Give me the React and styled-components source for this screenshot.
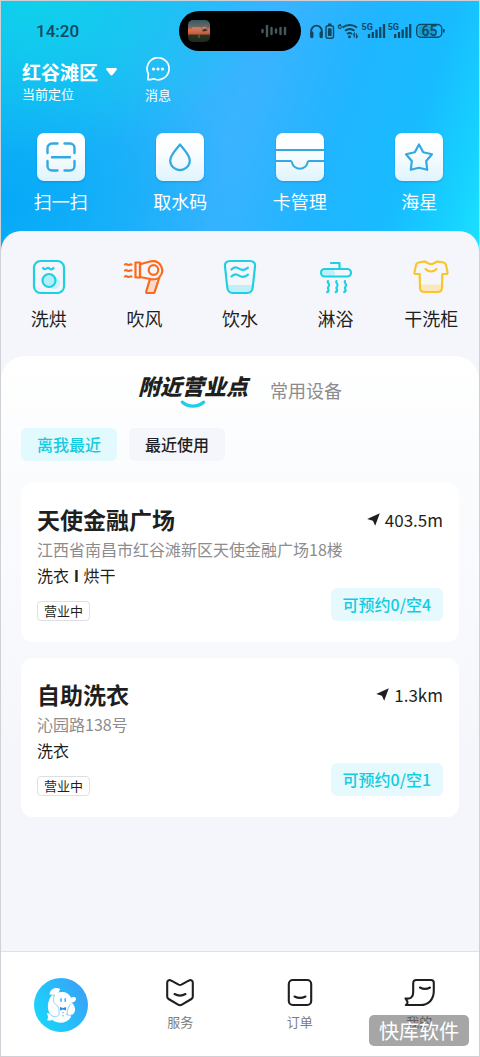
import React, { useState } from 'react'
import styled, { createGlobalStyle } from 'styled-components';

const GlobalStyle = createGlobalStyle`
    :root{
        --black: #1f1f21;
        --gray: #8c8c8e;
        --white: #fff;
        --cyan: #14cbe0;
        --cyanLight: #e2f9fd;
        --background: #f5f6fb;
    }
    *{
        box-sizing: border-box;
    }
    body{
        margin: 0;
        font-family: "Noto Sans CJK SC", "Noto Sans", sans-serif;
        color: var(--black);
    }
    button{
        font-family: inherit;
        color: inherit;
        border: 0;
        padding: 0;
        background: none;
        cursor: pointer;
    }
    a{
        text-decoration: none;
        color: inherit;
    }
    h2, p{
        margin: 0;
    }
    svg{
        display: block;
        flex: none;
    }
`

const PageStyled = styled.div`
    display: flex;
    flex-direction: column;
    min-height: 100vh;
    border: 1px solid #cfd1d6;
    background: var(--background);
`

const HeaderStyled = styled.header`
    padding: 10px 0 41px;
    color: var(--white);
    background:
        radial-gradient(ellipse 48% 60% at 8% 0%, rgba(14,210,234,0.9) 0%, rgba(16,208,232,0) 100%),
        radial-gradient(ellipse 50% 70% at 0% 80%, #06a9f8 0%, rgba(6,169,248,0) 100%),
        linear-gradient(108deg, #14bcf4 0%, #28b6fa 28%, #3ab3ff 50%, #20b5ff 68%, #18bcff 82%, #16d2ff 93%, #1ce2ff 100%);
`

const StatusBarStyled = styled.div`
    display: grid;
    grid-template-columns: 1fr 122px 1fr;
    align-items: center;
    height: 40px;
    color: #12485f;
    time{
        padding-left: 35px;
        font-family: Roboto, "Noto Sans", sans-serif;
        font-size: 17px;
        font-weight: 500;
    }
`

const IslandStyled = styled.div`
    display: flex;
    align-items: center;
    justify-content: space-between;
    height: 40px;
    padding: 0 14px 0 9px;
    border-radius: 20px;
    background: #000;
`

const SignalsStyled = styled.div`
    display: flex;
    align-items: center;
    padding-left: 8px;
`

const PlaceBarStyled = styled.div`
    display: flex;
    gap: 28px;
    padding: 6px 21px 0;
`

const PlaceStyled = styled.button`
    text-align: left;
    font-size: 13px;
    line-height: 18px;
    strong{
        display: flex;
        align-items: center;
        gap: 8px;
        font-size: 19px;
        line-height: 26px;
        font-weight: 700;
    }
`

const MessageStyled = styled.button`
    display: flex;
    flex-direction: column;
    align-items: center;
    gap: 4px;
    font-size: 13px;
    line-height: 20px;
`

const QuickGridStyled = styled.nav`
    display: grid;
    grid-template-columns: repeat(4, 1fr);
    padding-top: 28px;
`

const QuickItemStyled = styled.a`
    display: flex;
    flex-direction: column;
    align-items: center;
    gap: 7px;
    font-size: 18px;
    line-height: 26px;
    svg{
        filter: drop-shadow(0 1px 1px rgba(0,90,170,0.3));
    }
`

const ServicesStyled = styled.nav`
    display: grid;
    grid-template-columns: repeat(5, 1fr);
    margin-top: -24px;
    padding: 28px 0 48px;
    border-radius: 20px 20px 0 0;
    background: var(--background);
`

const ServiceItemStyled = styled.a`
    display: flex;
    flex-direction: column;
    align-items: center;
    gap: 9px;
    font-size: 18px;
    line-height: 28px;
`

const NearbyStyled = styled.main`
    flex: 1;
    margin-top: -24px;
    padding: 14px 20px 24px;
    border-radius: 24px 24px 0 0;
    background: linear-gradient(180deg, #fff 0, #fbfcfe 110px, #f5f6fb 420px);
`

const TabsStyled = styled.div`
    display: flex;
    align-items: flex-start;
    justify-content: center;
    gap: 22px;
    height: 42px;
`

const TabStyled = styled.button`
    display: flex;
    flex-direction: column;
    align-items: center;
    font-size: ${({ $active }) => $active ? '22px' : '18px'};
    font-weight: ${({ $active }) => $active ? 900 : 400};
    font-style: ${({ $active }) => $active ? 'italic' : 'normal'};
    line-height: ${({ $active }) => $active ? '30px' : '40px'};
    color: ${({ $active }) => $active ? 'var(--black)' : 'var(--gray)'};
`

const FiltersStyled = styled.div`
    display: flex;
    gap: 12px;
    padding: 16px 0 22px;
`

const FilterStyled = styled.button`
    height: 33px;
    padding: 0 16px;
    border-radius: 6px;
    font-size: 16px;
    font-weight: 500;
    line-height: 33px;
    color: ${({ $active }) => $active ? 'var(--cyan)' : 'var(--black)'};
    background: ${({ $active }) => $active ? 'var(--cyanLight)' : 'var(--background)'};
`

const ListStyled = styled.div`
    display: grid;
    gap: 16px;
`

const CardStyled = styled.article`
    padding: 19px 16px 21px;
    border-radius: 12px;
    background: var(--white);
    h2{
        font-size: 23px;
        font-weight: 700;
        line-height: 34px;
    }
    p{
        font-size: 16px;
        line-height: 26px;
    }
    .address{
        color: var(--gray);
    }
    b{
        font-weight: 700;
        padding: 0 1px;
    }
`

const CardRowStyled = styled.div`
    display: flex;
    align-items: ${({ $align }) => $align};
    justify-content: space-between;
`

const DistanceStyled = styled.span`
    display: flex;
    align-items: center;
    gap: 5px;
    font-size: 17px;
`

const StatusStyled = styled.span`
    display: block;
    width: fit-content;
    margin-top: 13px;
    padding: 0 6px;
    border: 1px solid #dedfe2;
    border-radius: 4px;
    font-size: 13px;
    line-height: 18px;
`

const ReserveStyled = styled.button`
    height: 33px;
    padding: 0 12px;
    border-radius: 6px;
    font-size: 16px;
    font-weight: 500;
    line-height: 33px;
    color: var(--cyan);
    background: #e6fafe;
`

const TabBarStyled = styled.nav`
    position: relative;
    display: grid;
    grid-template-columns: repeat(4, 1fr);
    align-items: center;
    height: 105px;
    border-top: 1px solid #e0e1e5;
    background: var(--white);
`

const TabBarItemStyled = styled.a`
    display: flex;
    flex-direction: column;
    align-items: center;
    gap: 4px;
    padding-top: 2px;
    font-size: 13px;
    line-height: 20px;
    color: #7d7d80;
`

const WatermarkStyled = styled.div`
    position: absolute;
    right: 10px;
    bottom: 10px;
    padding: 0 10px;
    border-radius: 5px;
    font-size: 20px;
    line-height: 31px;
    color: var(--white);
    background: rgba(60,60,60,0.46);
`

const IslandArt = () => (
    <svg width="22" height="22" viewBox="0 0 22 22">
        <defs>
            <linearGradient id="sunset" x1="0" y1="0" x2="0" y2="1">
                <stop offset="0" stopColor="#355a63" />
                <stop offset=".3" stopColor="#6e6463" />
                <stop offset=".45" stopColor="#e0704a" />
                <stop offset=".62" stopColor="#c25c3e" />
                <stop offset=".7" stopColor="#2b3322" />
                <stop offset="1" stopColor="#1c2a1c" />
            </linearGradient>
        </defs>
        <rect width="22" height="22" rx="5" fill="url(#sunset)" />
        <path d="M4 8h9M14 8l4-1" stroke="#c9c2b8" strokeWidth="1" opacity=".6" />
        <path d="M14 10l3-1 3 1-2 1-3 .5z" fill="#3a2c2c" />
        <path d="M11 13v5" stroke="#8b6a50" strokeWidth="1" />
    </svg>
)

const IslandWave = () => (
    <svg width="26" height="14" viewBox="0 0 26 14" stroke="#46595c" strokeWidth="2.400" strokeLinecap="round">
        <path d="M1.500 6v2M6 2v10M10.500 4v6M15 5.500v3M19.500 4v6M24 4v6" />
    </svg>
)

const StatusIcons = () => (
    <svg width="136" height="20" viewBox="0 0 136 20" fill="none" stroke="#12485f">
        <path d="M2.200 13v-3a5.300 5.300 0 0 1 10.600 0v3" strokeWidth="1.800" />
        <path d="M2.800 12v3.500M12.200 12v3.500" strokeWidth="3.400" strokeLinecap="round" />
        <rect x="17" y="4.800" width="7.500" height="12.500" rx="2" strokeWidth="1.400" />
        <path d="M19 3.300h3.500" strokeWidth="1.600" />
        <path d="M18.900 7.300h3.700v7.700h-3.700z" fill="#12485f" stroke="none" />
        <path d="M33.500 6.500a12 12 0 0 1 14.500 0M36 9.800a7.800 7.800 0 0 1 9.500 0M38 13a4.200 4.200 0 0 1 5 0" strokeWidth="1.900" />
        <circle cx="40.500" cy="15.800" r="1.500" fill="#12485f" stroke="none" />
        <path d="M45.300 16.500v-4l-1.300 1.500M47.500 12.500v4l1.300-1.500" strokeWidth="1.200" />
        <path d="M60 17v-4M63.800 17v-6M67.500 17v-8.500M71.200 17v-11M75 17v-14" strokeWidth="2.300" />
        <path d="M86.200 17v-4M90 17v-6M93.700 17v-8.500M97.500 17v-11M101.200 17v-14" strokeWidth="2.300" />
        <rect x="107.700" y="3.500" width="25" height="12.800" rx="4" strokeWidth="1.400" />
        <rect x="109.500" y="5.300" width="16" height="9.200" rx="2" fill="#12485f" fillOpacity=".28" stroke="none" />
        <path d="M134.800 8v3.600" strokeWidth="1.600" />
        <g fill="#12485f" stroke="none" fontWeight="700" fontFamily="Roboto, sans-serif">
            <text x="28.500" y="8" fontSize="8">6</text>
            <text x="52.500" y="9" fontSize="9">5G</text>
            <text x="78.700" y="9" fontSize="9">5G</text>
            <text x="112.500" y="14.700" fontSize="14" fontWeight="500">65</text>
        </g>
    </svg>
)

const MessageIcon = () => (
    <svg width="26" height="24" viewBox="0 0 26 24" fill="none" stroke="#fff" strokeWidth="1.700" strokeLinejoin="round">
        <path d="M2.800 22.600l.6-5.600A11 11 0 1 1 8.600 21.800c-1.500.8-3.600 1-5.800.8z" />
        <g fill="#fff" stroke="none">
            <circle cx="8.500" cy="12" r="1.600" />
            <circle cx="13" cy="12" r="1.600" />
            <circle cx="17.500" cy="12" r="1.600" />
        </g>
    </svg>
)

const Tile = ({ children }) => (
    <svg width="48" height="48" viewBox="0 0 48 48" fill="none" stroke="#33a9e2" strokeWidth="2.200" strokeLinecap="round" strokeLinejoin="round">
        <defs>
            <linearGradient id="tile" x1="0" y1="0" x2="0" y2="1">
                <stop offset="0" stopColor="#fff" />
                <stop offset=".4" stopColor="#fafdff" />
                <stop offset="1" stopColor="#dff4fd" />
            </linearGradient>
        </defs>
        <rect width="48" height="48" rx="7" fill="url(#tile)" stroke="none" />
        {children}
    </svg>
)

const quickItems = [
    {
        label: '扫一扫',
        icon: <Tile>
            <path d="M20.500 10.500h-5.500a4.500 4.500 0 0 0-4.500 4.500v5M27.500 10.500h5.500a4.500 4.500 0 0 1 4.500 4.500v5M10.500 28v5a4.500 4.500 0 0 0 4.500 4.500h5.500M37.500 28v5a4.500 4.500 0 0 1-4.500 4.500h-5.500M15 24.200h18" strokeWidth="2.400" />
        </Tile>
    },
    {
        label: '取水码',
        icon: <Tile>
            <path d="M24 11.500c-4 5-9.800 10.500-9.800 16a9.800 9.600 0 0 0 19.600 0c0-5.500-5.800-11-9.800-16z" />
        </Tile>
    },
    {
        label: '卡管理',
        icon: <Tile>
            <path d="M0 17h48M0 28h14.500c.8 0 1.200.5 1.500 1.500a8 8 0 0 0 15.600 0c.3-1 .8-1.500 1.600-1.500H48" strokeLinecap="butt" strokeWidth="2" />
        </Tile>
    },
    {
        label: '海星',
        icon: <Tile>
            <path d="M24 11.500l4.200 7.800 8.800 2-5.800 6.700 1 8.800-8.200-2-8.200 2 1-8.800-5.800-6.700 8.800-2z" strokeWidth="2.200" />
        </Tile>
    },
]

const serviceItems = [
    {
        label: '洗烘',
        icon: <svg width="36" height="36" viewBox="0 0 36 36" fill="none" stroke="#1fd0e3" strokeWidth="2.200" strokeLinecap="round">
            <circle cx="23" cy="24" r="6" fill="#c9f3f8" stroke="none" />
            <rect x="3" y="2" width="30" height="32" rx="6.500" />
            <path d="M12 9c1.200 1.500 2.200 1.500 3.500.5s2.300-.8 3.200.2 2.500 1 3.800-.7" />
            <circle cx="18" cy="21.500" r="6.500" fill="#b3eff6" />
        </svg>
    },
    {
        label: '吹风',
        icon: <svg width="42" height="36" viewBox="0 0 42 36" fill="none" stroke="#fb6a1c" strokeWidth="2.200" strokeLinejoin="round" strokeLinecap="round">
            <path d="M25 22l9 0-2.500 11h-7z" fill="#fcd9c8" stroke="none" />
            <path d="M12.500 3.500h4.500v15h-4.500z" />
            <path d="M17 5.200L28 2.300a9.300 9.300 0 0 1 8.500 15.600l-4.800 15c-.2.800-.6 1.100-1.400 1.100h-6c-1 0-1.400-.6-1.100-1.500L27 20l-10-2z" />
            <path d="M27 20c2.500.8 5 .6 8-.5" />
            <circle cx="30.500" cy="11" r="4.800" />
            <path d="M2 5.500c1.500-1.300 2.500.8 4 .5s1.500-.8 2.500-.5M2 11.500c1.500-1.300 2.500.8 4 .5s1.500-.8 2.500-.5M2 17.500c1.500-1.300 2.500.8 4 .5s1.500-.8 2.500-.5" />
        </svg>
    },
    {
        label: '饮水',
        icon: <svg width="36" height="36" viewBox="0 0 36 36" fill="none" stroke="#1fd0e3" strokeWidth="2.200" strokeLinecap="round" strokeLinejoin="round">
            <path d="M5 26h26l-1 5.500-3 2H9l-3-2z" fill="#c0f0f6" stroke="none" />
            <path d="M8 2h20c3.500 0 5.500 2 5 5.500l-2.300 21c-.4 3.500-2.400 5.500-5.400 5.500H10.700c-3 0-5-2-5.400-5.500L3 7.500C2.500 4 4.500 2 8 2z" />
            <path d="M9.500 10.500c2.500-3 5-2.500 7.500-.8s5.500 2 9-1M9.500 17.500c2.500-3 5-2.500 7.500-.8s5.500 2 9-1" />
        </svg>
    },
    {
        label: '淋浴',
        icon: <svg width="36" height="36" viewBox="0 0 36 36" fill="none" stroke="#1fd0e3" strokeWidth="2.200" strokeLinecap="round" strokeLinejoin="round">
            <rect x="4" y="11" width="13" height="6" rx="3" fill="#c0f0f6" stroke="none" />
            <path d="M13 4h8.500v5" />
            <rect x="3" y="10" width="30" height="7.500" rx="3.700" />
            <path d="M10 22c-1.500 1.500 1.600 2.500 1 4.500-.5 1.500-1.800 2-.8 3.500s0 2.500-1 3.200M18.500 22c-1.500 1.500 1.600 2.500 1 4.500-.5 1.500-1.800 2-.8 3.500s0 2.500-1 3.200M27 22c-1.500 1.500 1.600 2.500 1 4.500-.5 1.500-1.800 2-.8 3.500s0 2.500-1 3.200" />
        </svg>
    },
    {
        label: '干洗柜',
        icon: <svg width="36" height="36" viewBox="0 0 36 36" fill="none" stroke="#fac52c" strokeWidth="2.200" strokeLinecap="round" strokeLinejoin="round">
            <path d="M7.500 25.500h21v5l-2 2.500h-17l-2-2.500z" fill="#fbe9bd" stroke="none" />
            <path d="M5.500 3.500l5.500-.8c1.500-.2 2.200.3 3 1 2.500 1.900 5.500 1.900 8 0 .8-.7 1.500-1.200 3-1l5.500.8c1.300.2 2 .7 2.300 2l1.700 7.500c.3 1.300-.3 2-1.500 2h-3.700L29 28.500c0 3-1.500 4.500-4.500 4.500h-13C8.500 33 7 31.500 7 28.500L6.700 15H3c-1.200 0-1.800-.7-1.500-2l1.700-7.500c.3-1.300 1-1.800 2.300-2z" />
            <path d="M12.500 10c3 3.300 8 3.300 11 0" />
        </svg>
    },
]

const Mascot = () => (
    <svg width="54" height="54" viewBox="0 0 54 54">
        <defs>
            <linearGradient id="mascot" x1="0" y1=".8" x2="1" y2=".2">
                <stop offset="0" stopColor="#17d8fb" />
                <stop offset=".55" stopColor="#2abaf9" />
                <stop offset="1" stopColor="#3a9ff8" />
            </linearGradient>
        </defs>
        <circle cx="27" cy="27" r="27" fill="url(#mascot)" />
        <g fill="#fff">
            <path d="M15.500 16.500c.3-4.500 4-7 8.500-6.300 1.500.2 2.500.8 2 1.500-.6.500-1 1-.8 2.200L22 17z" />
            <path d="M18 17c-3.500 4-5.500 11.500-3 17 1.500 3 4 4 7 3.500l14 0c3.500-.5 5.500-3.500 5-7-.4-3-2-5-4-6.500z" />
            <path d="M18 38c-1-1.500-3-2.800-5-3 .6 2 .8 3.200 1.300 4.200-.6 1-1 2-1 3.300 1.700.2 3.400.1 5-.5 6 4.500 15 3.500 18.700-3L36 34H20z" />
        </g>
        <path d="M19 20.500c1.500-4.500 5.500-7 10-6.500 4 .4 6.500 2.500 8 5.500 1.500 0 2.500-1 3.800-.4 1.800 1 1.500 4-1 4.800-1 .4-2.200.5-3.300.5-1.500 3-4.500 4.500-8.500 4.300-6-.3-10-3.700-9-8.200z" fill="#fff" />
        <g fill="none" stroke="#7fcdfa" strokeWidth=".9" strokeLinecap="round">
            <path d="M20 18c-1.500 4-.7 7 2.700 9.200 2 2 3 5 2.300 9M36.500 26c-2 2.500-3.500 6-3.500 11M18 38c3 1.500 6 .5 7-1.300M32.500 36c1.500 1.500 4 1.800 5.500.6" />
        </g>
        <path d="M27 20.800v2.400M31.200 20.800v2.400" stroke="#2ba8f3" strokeWidth="1.400" strokeLinecap="round" />
        <path d="M26 29l3 1 3-1v3.600l-3-1-3 1z" fill="#2b8fe8" />
        <circle cx="29" cy="34.800" r=".8" fill="#5bb9f6" />
        <circle cx="29" cy="37.800" r=".8" fill="#5bb9f6" />
    </svg>
)

const NavIcon = ({ children }) => (
    <svg width="32" height="30" viewBox="0 0 32 30" fill="none" stroke="#1f1f21" strokeWidth="2.100" strokeLinecap="round" strokeLinejoin="round">
        {children}
    </svg>
)

const navItems = [
    {
        label: '服务',
        icon: <NavIcon>
            <path d="M7.300 2.600L14.600 6.600c1 .5 1.800.5 2.800 0L24.700 2.600c2.300-1.200 4.100-.2 4.100 2.200V18.500c0 1.200-.4 1.900-1.400 2.500l-9.500 5.700c-1.300.8-2.500.8-3.800 0L4.600 21c-1-.6-1.400-1.300-1.400-2.500V4.800c0-2.400 1.800-3.400 4.100-2.200z" />
            <path d="M10.500 16c3.500 2 7.500 2 11 0" />
        </NavIcon>
    },
    {
        label: '订单',
        icon: <NavIcon>
            <rect x="4.800" y="2" width="22.400" height="25" rx="4" />
            <path d="M10.500 18.500c3.500 1.800 7.500 1.800 11 0" />
        </NavIcon>
    },
    {
        label: '我的',
        icon: <NavIcon>
            <path d="M13.500 2h14.500c2 0 2.800.8 2.800 2.800v8C30.800 21.500 25.500 27 17.500 27H2.800c1.500-1 2-2 1.700-3.300L2.500 20.500c5 .8 7.700-1.500 7.700-6V5.500c0-2.500 1-3.500 3.300-3.500z" />
            <path d="M17 9.500c3 1.700 7 1.700 10 0" />
        </NavIcon>
    },
]

const shops = [
    { name: '天使金融广场', address: '江西省南昌市红谷滩新区天使金融广场18楼', services: ['洗衣', '烘干'], distance: '403.5m', reserve: '可预约0/空4' },
    { name: '自助洗衣', address: '沁园路138号', services: ['洗衣'], distance: '1.3km', reserve: '可预约0/空1' },
]

const tabs = ['附近营业点', '常用设备']
const filters = ['离我最近', '最近使用']

const ShopCard = ({ name, address, services, distance, reserve }) => (
    <CardStyled>
        <CardRowStyled $align="center">
            <h2>{name}</h2>
            <DistanceStyled>
                <svg width="13" height="13" viewBox="0 0 13 13" fill="#1f1f21">
                    <path d="M12.800.3L8.200 12.700 5.900 7.700.2 6z" />
                </svg>
                {distance}
            </DistanceStyled>
        </CardRowStyled>
        <p className="address">{address}</p>
        <CardRowStyled $align="flex-end">
            <div>
                <p>
                    {services.map((service, i) => (
                        <React.Fragment key={service}>{i > 0 && <b> I </b>}{service}</React.Fragment>
                    ))}
                </p>
                <StatusStyled>营业中</StatusStyled>
            </div>
            <ReserveStyled>{reserve}</ReserveStyled>
        </CardRowStyled>
    </CardStyled>
)

const App = () => {

    const [tab, setTab] = useState(0)
    const [filter, setFilter] = useState(0)

    return (
        <PageStyled>
            <GlobalStyle />
            <HeaderStyled>
                <StatusBarStyled>
                    <time>14:20</time>
                    <IslandStyled>
                        <IslandArt />
                        <IslandWave />
                    </IslandStyled>
                    <SignalsStyled><StatusIcons /></SignalsStyled>
                </StatusBarStyled>
                <PlaceBarStyled>
                    <PlaceStyled>
                        <strong>
                            红谷滩区
                            <svg width="11" height="8" viewBox="0 0 11 8" fill="#fff">
                                <path d="M1.500 0h8c1.300 0 1.800 1 1 2L6.700 6.800c-.7.900-1.700.9-2.400 0L.5 2C-.3 1 .2 0 1.500 0z" />
                            </svg>
                        </strong>
                        当前定位
                    </PlaceStyled>
                    <MessageStyled>
                        <MessageIcon />
                        消息
                    </MessageStyled>
                </PlaceBarStyled>
                <QuickGridStyled>
                    {quickItems.map(({ label, icon }) => (
                        <QuickItemStyled href="#" key={label}>{icon}{label}</QuickItemStyled>
                    ))}
                </QuickGridStyled>
            </HeaderStyled>
            <ServicesStyled>
                {serviceItems.map(({ label, icon }) => (
                    <ServiceItemStyled href="#" key={label}>{icon}{label}</ServiceItemStyled>
                ))}
            </ServicesStyled>
            <NearbyStyled>
                <TabsStyled>
                    {tabs.map((name, i) => (
                        <TabStyled key={name} $active={tab === i} onClick={() => setTab(i)}>
                            {name}
                            {tab === i &&
                                <svg width="26" height="9" viewBox="0 0 26 9" fill="none" stroke="#1fcfe6" strokeWidth="3.400" strokeLinecap="round">
                                    <path d="M2.500 2.200c6 5.200 15 5.200 21 0" />
                                </svg>
                            }
                        </TabStyled>
                    ))}
                </TabsStyled>
                <FiltersStyled>
                    {filters.map((name, i) => (
                        <FilterStyled key={name} $active={filter === i} onClick={() => setFilter(i)}>{name}</FilterStyled>
                    ))}
                </FiltersStyled>
                <ListStyled>
                    {shops.map(shop => <ShopCard key={shop.name} {...shop} />)}
                </ListStyled>
            </NearbyStyled>
            <TabBarStyled>
                <TabBarItemStyled href="#" aria-label="首页"><Mascot /></TabBarItemStyled>
                {navItems.map(({ label, icon }) => (
                    <TabBarItemStyled href="#" key={label}>{icon}{label}</TabBarItemStyled>
                ))}
                <WatermarkStyled>快库软件</WatermarkStyled>
            </TabBarStyled>
        </PageStyled>
    );
}

export default App;
